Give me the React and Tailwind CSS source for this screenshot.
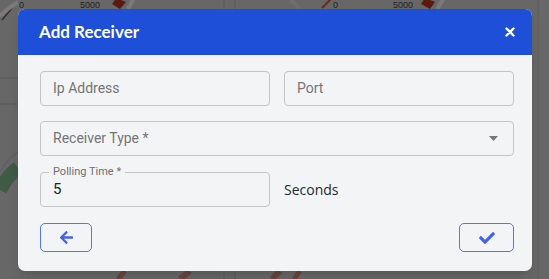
import React from "react";
import { FaArrowLeft, FaCheck } from "react-icons/fa";

function Backdrop() {
  return (
    <svg className="absolute inset-0" width="549" height="279" viewBox="0 0 549 279">
      <rect width="549" height="279" fill="#676767" />
      <line x1="0" y1="78" x2="18" y2="78" stroke="#5a5a5a" strokeWidth="1" />
      <line x1="0" y1="104" x2="18" y2="104" stroke="#5a5a5a" strokeWidth="1" />
      <line x1="224" y1="0" x2="224" y2="9" stroke="#5a5a5a" />
      <line x1="235" y1="0" x2="235" y2="9" stroke="#5a5a5a" />
      <line x1="224" y1="271" x2="224" y2="279" stroke="#5a5a5a" />
      <line x1="235" y1="271" x2="235" y2="279" stroke="#5a5a5a" />
      <line x1="538" y1="0" x2="538" y2="279" stroke="#5f5f5f" />
      <path d="M2 20 L12 8" stroke="#3a2a2a" strokeWidth="1.5" />
      <path d="M0 16 Q8 8 18 2" stroke="#7a7a7a" strokeWidth="4" fill="none" />
      <text x="19" y="8" fontSize="9" fill="#222" fontFamily="Liberation Sans, sans-serif">0</text>
      <text x="80" y="8" fontSize="9" fill="#222" fontFamily="Liberation Sans, sans-serif">5000</text>
      <path d="M116 -2 L126 2 L120 9 L112 4 Z" fill="#5a1a10" />
      <path d="M128 9 L134 -2" stroke="#7a7a7a" strokeWidth="4" />
      <path d="M0 190 Q8 175 18 168" stroke="#3f5a45" strokeWidth="14" fill="none" />
      <path d="M0 172 Q8 158 18 152" stroke="#5a5a5a" strokeWidth="1" fill="none" />
      <path d="M290 0 L300 8" stroke="#6f6f6f" strokeWidth="4" />
      <text x="333" y="8" fontSize="9" fill="#222" fontFamily="Liberation Sans, sans-serif">0</text>
      <path d="M322 8 L332 -2" stroke="#6a2a20" strokeWidth="2" />
      <text x="393" y="8" fontSize="9" fill="#222" fontFamily="Liberation Sans, sans-serif">5000</text>
      <path d="M425 -2 L435 2 L430 9 L421 4 Z" fill="#5a1a10" />
      <path d="M437 9 L444 -2" stroke="#7a7a7a" strokeWidth="4" />
      <path d="M180 279 L190 271" stroke="#6a4540" strokeWidth="6" />
      <path d="M272 279 L280 271" stroke="#6a4540" strokeWidth="6" />
      <path d="M118 279 L125 271" stroke="#6a4540" strokeWidth="5" />
      <path d="M294 279 L300 271" stroke="#6a4540" strokeWidth="5" />
    </svg>
  );
}

export default function App() {
  return (
    <div className="relative w-[549px] h-[279px] overflow-hidden bg-[#676767]">
      <Backdrop />
      <div className="relative pl-[18px] pt-[9px]">
        <div className="w-[514px] h-[262px] rounded-[7px] overflow-hidden bg-[#f3f4f6] shadow-lg">
          <div className="h-[46px] bg-[#1e4fd8] flex items-center justify-between pl-[21px] pr-[17px]">
            <span
              className="text-white text-[17px] font-bold"
              style={{ fontFamily: "Lato, 'Noto Sans', sans-serif" }}
            >
              Add Receiver
            </span>
            <svg width="10" height="10" viewBox="0 0 10 10">
              <path d="M1.5 1.5 L8.5 8.5 M8.5 1.5 L1.5 8.5" stroke="#fff" strokeWidth="2.4" strokeLinecap="round" />
            </svg>
          </div>
          <div
            className="pl-[22px] pr-[18px] pt-[16px] flex flex-col"
            style={{ fontFamily: "Roboto, 'Liberation Sans', sans-serif" }}
          >
            <div className="flex gap-[14px]">
              <div className="w-[230px] h-[35px] border border-[#c4c4c4] rounded-[4px] flex items-center pl-[12px] text-[14px] text-[#757575]">
                Ip Address
              </div>
              <div className="w-[230px] h-[35px] border border-[#c4c4c4] rounded-[4px] flex items-center pl-[12px] text-[14px] text-[#757575]">
                Port
              </div>
            </div>
            <div className="mt-[15px] w-[474px] h-[35px] border border-[#c4c4c4] rounded-[4px] flex items-center justify-between pl-[12px] pr-[15px] text-[14px] text-[#757575]">
              <span>Receiver Type *</span>
              <svg width="9" height="5" viewBox="0 0 9 5">
                <path d="M0 0 L9 0 L4.5 5 Z" fill="#767676" />
              </svg>
            </div>
            <div className="mt-[16px] flex items-center gap-[14px]">
              <div className="relative w-[230px] h-[35px] border border-[#c4c4c4] rounded-[4px] flex items-center pl-[12px] text-[15px] text-[#222]">
                <span className="absolute left-[8px] top-[-8px] px-[4px] bg-[#f3f4f6] text-[11px] leading-[14px] text-[#6f6f6f]">
                  Polling Time *
                </span>
                5
              </div>
              <span
                className="text-[14px] text-[#1f2937] font-medium"
                style={{ fontFamily: "'Open Sans', 'Noto Sans', sans-serif" }}
              >
                Seconds
              </span>
            </div>
            <div className="mt-[16px] flex justify-between">
              <div className="w-[52px] h-[29px] border border-[#5573f6] rounded-[5px] flex items-center justify-center text-[#4561f2]">
                <FaArrowLeft size={15} />
              </div>
              <div className="w-[55px] h-[29px] border border-[#5573f6] rounded-[5px] flex items-center justify-center text-[#4561f2]">
                <FaCheck size={16} />
              </div>
            </div>
          </div>
        </div>
      </div>
    </div>
  );
}
